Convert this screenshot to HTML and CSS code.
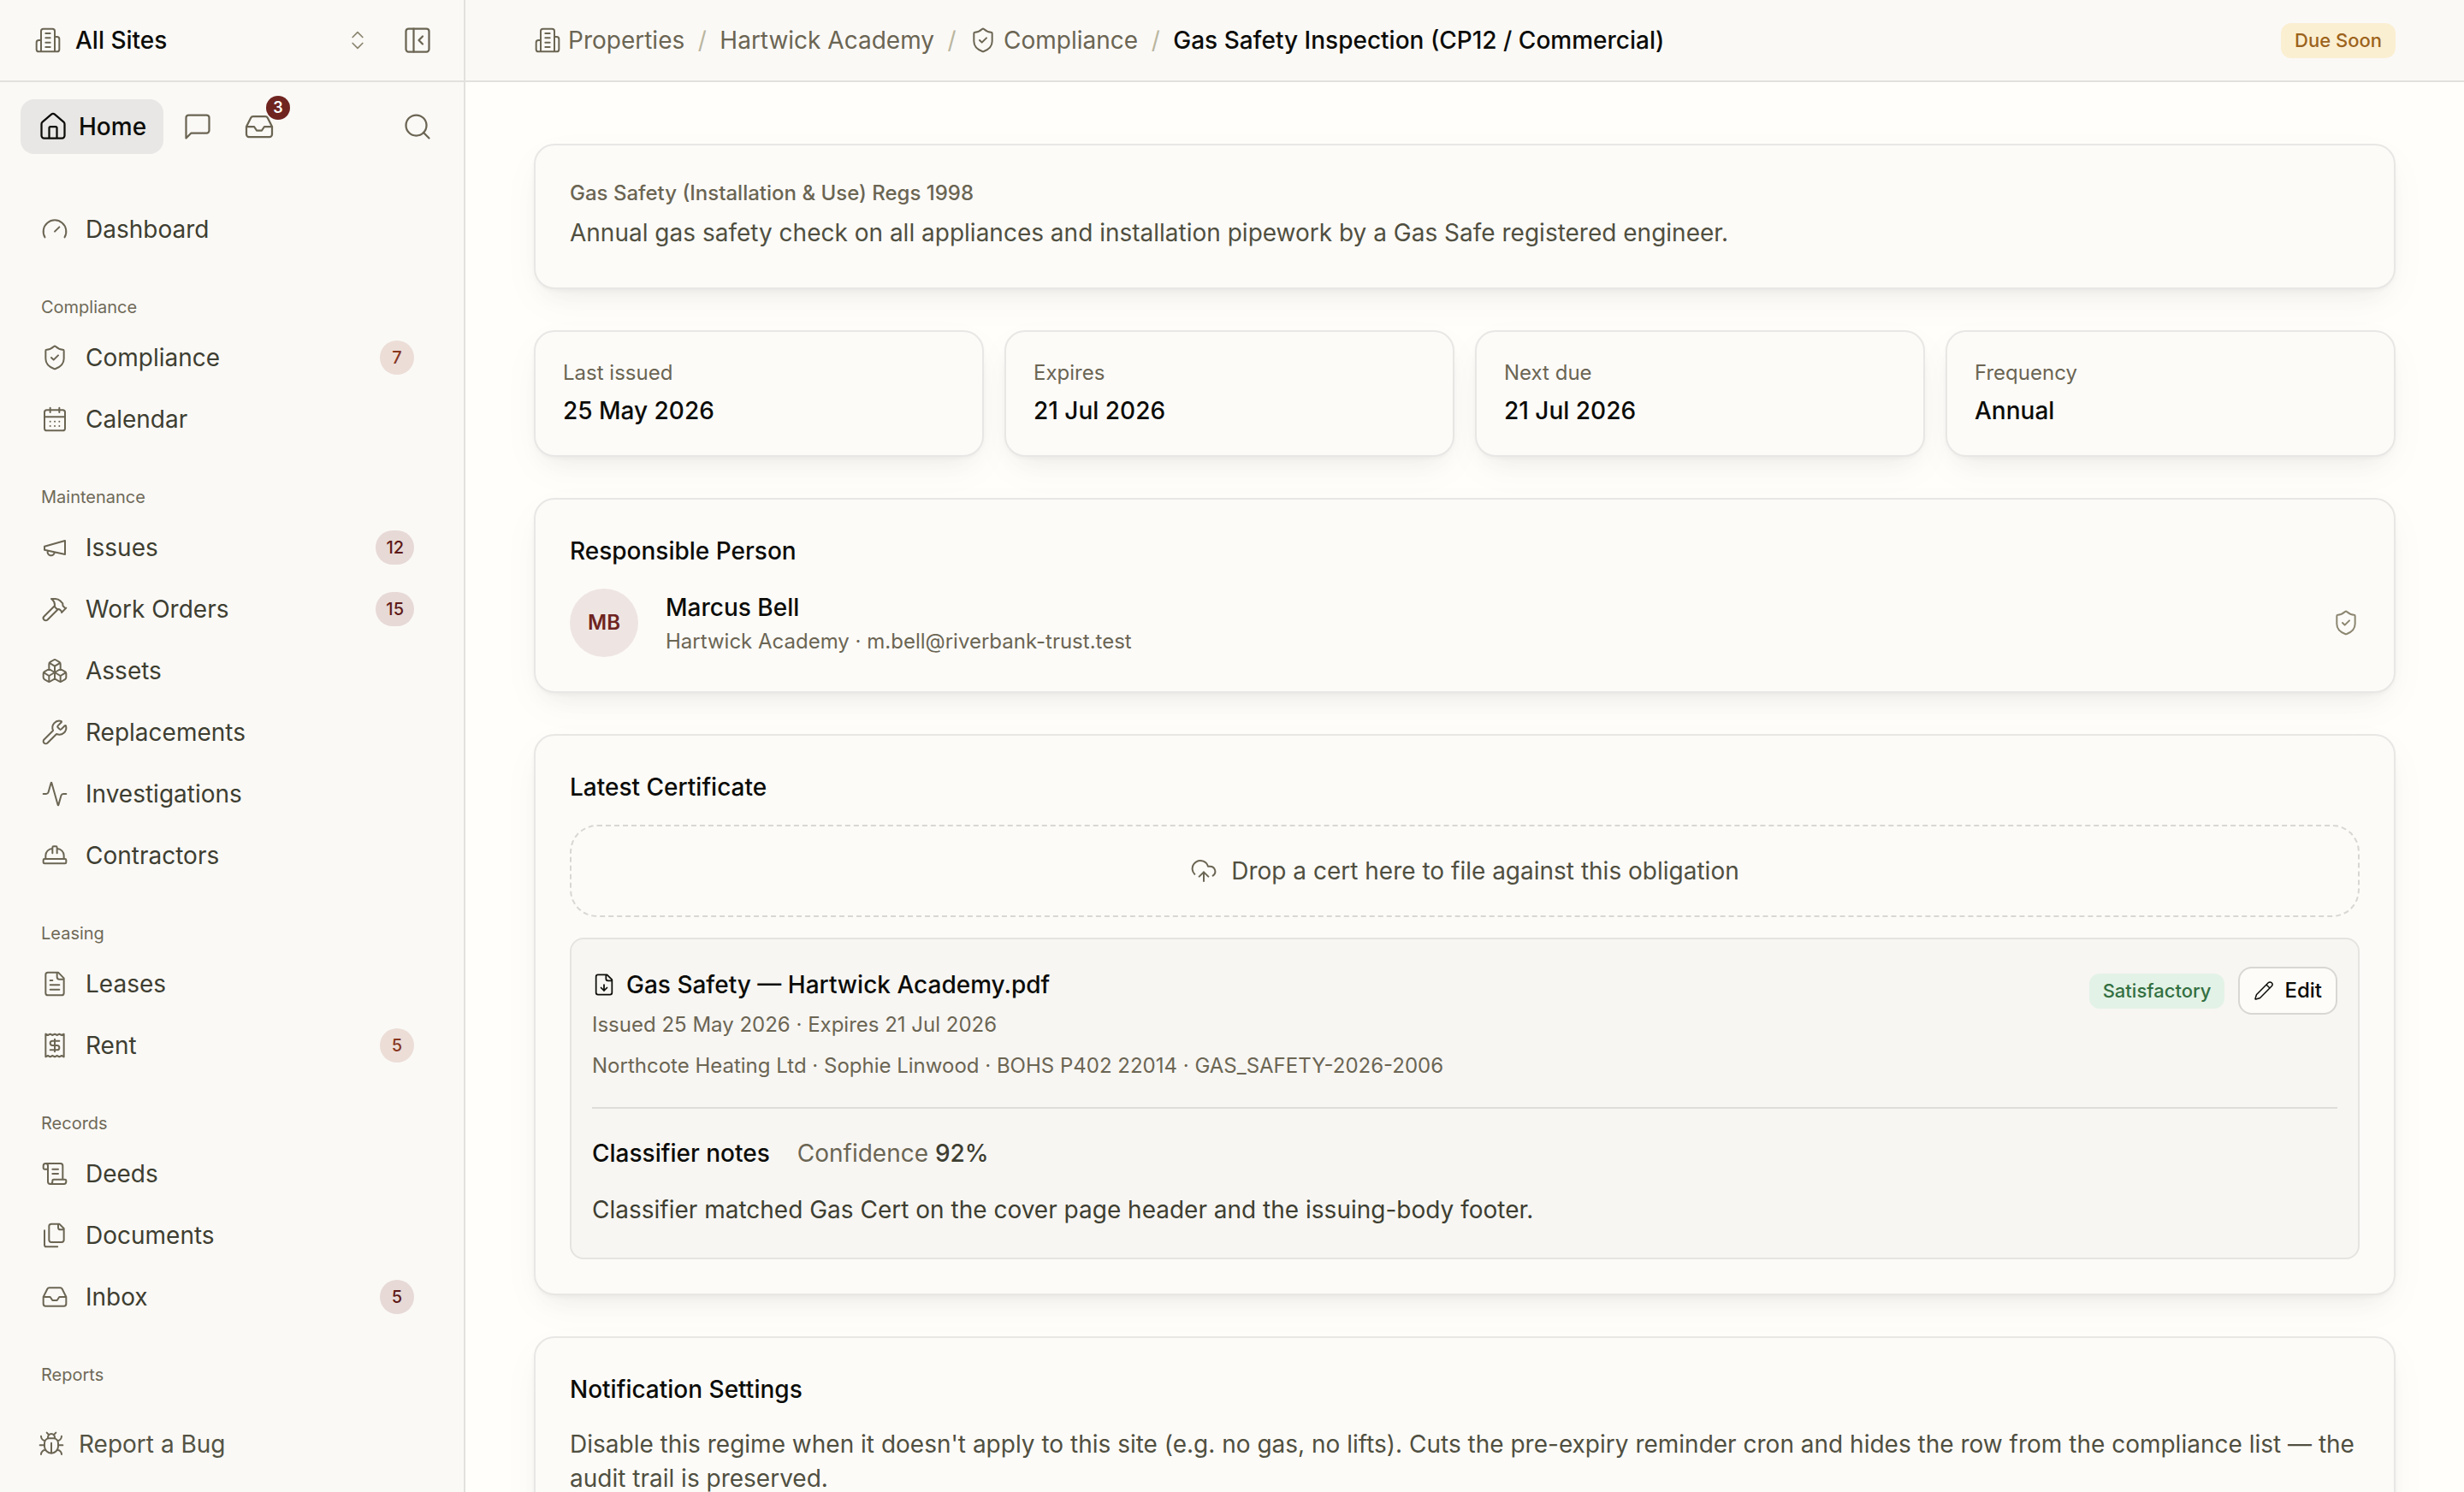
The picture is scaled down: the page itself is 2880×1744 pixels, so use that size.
FILE: index.html
```html
<!DOCTYPE html>
<html lang="en">

<head>
    <meta charset="UTF-8">
    <meta name="viewport" content="width=device-width, initial-scale=1.0">
    <title>Gas Safety Inspection (CP12 / Commercial)</title>
    <link rel="stylesheet" href="styles.css">
</head>

<body>
    <!-- Icon sprite -->
    <svg class="sprite">
        <symbol id="building" viewBox="0 0 24 24">
            <path d="M6 22V4a2 2 0 0 1 2-2h8a2 2 0 0 1 2 2v18Z M6 12H4a2 2 0 0 0-2 2v6a2 2 0 0 0 2 2h2 M18 9h2a2 2 0 0 1 2 2v9a2 2 0 0 1-2 2h-2 M10 6h4 M10 10h4 M10 14h4 M10 18h4" />
        </symbol>
        <symbol id="shield" viewBox="0 0 24 24">
            <path d="M20 13c0 5-3.5 7.5-7.66 8.95a1 1 0 0 1-.67-.01C7.5 20.5 4 18 4 13V6a1 1 0 0 1 1-1c2 0 4.5-1.2 6.24-2.72a1.17 1.17 0 0 1 1.52 0C14.51 3.81 17 5 19 5a1 1 0 0 1 1 1z M9 12l2 2 4-4" />
        </symbol>
        <symbol id="inbox" viewBox="0 0 24 24">
            <path d="M22 12h-6l-2 3h-4l-2-3H2 M5.45 5.11 2 12v6a2 2 0 0 0 2 2h16a2 2 0 0 0 2-2v-6l-3.45-6.89A2 2 0 0 0 16.76 4H7.24a2 2 0 0 0-1.79 1.11z" />
        </symbol>
    </svg>

    <div class="app">
        <aside class="sidebar">
            <div class="site-switch">
                <svg class="icon"><use href="#building" /></svg>
                <span class="site-name">All Sites</span>
                <svg class="icon icon-sm faint" viewBox="0 0 24 24"><path d="m7 15 5 5 5-5 M7 9l5-5 5 5" /></svg>
                <svg class="icon icon-lg" viewBox="0 0 24 24"><rect x="3" y="3" width="18" height="18" rx="2" /><path d="M9 3v18 M16 15l-3-3 3-3" /></svg>
            </div>

            <div class="quick-bar">
                <a class="home-btn">
                    <svg class="icon icon-lg" viewBox="0 0 24 24"><path d="M15 21v-8a1 1 0 0 0-1-1h-4a1 1 0 0 0-1 1v8 M3 10a2 2 0 0 1 .709-1.528l7-5.999a2 2 0 0 1 2.582 0l7 5.999A2 2 0 0 1 21 10v9a2 2 0 0 1-2 2H5a2 2 0 0 1-2-2z" /></svg>
                    Home
                </a>
                <a class="quick-btn">
                    <svg class="icon icon-lg" viewBox="0 0 24 24"><path d="M21 15a2 2 0 0 1-2 2H7l-4 4V5a2 2 0 0 1 2-2h14a2 2 0 0 1 2 2z" /></svg>
                </a>
                <a class="quick-btn">
                    <svg class="icon icon-lg"><use href="#inbox" /></svg>
                    <span class="notify">3</span>
                </a>
                <a class="quick-btn search">
                    <svg class="icon icon-lg" viewBox="0 0 24 24"><circle cx="11" cy="11" r="8" /><path d="m21 21-4.3-4.3" /></svg>
                </a>
            </div>

            <nav class="nav">
                <a class="nav-item">
                    <svg class="icon" viewBox="0 0 24 24"><path d="m12 14 4-4 M3.34 19a10 10 0 1 1 17.32 0" /></svg>
                    <span>Dashboard</span>
                </a>

                <p class="nav-label">Compliance</p>
                <a class="nav-item">
                    <svg class="icon"><use href="#shield" /></svg>
                    <span>Compliance</span>
                    <b class="count warm">7</b>
                </a>
                <a class="nav-item">
                    <svg class="icon" viewBox="0 0 24 24"><rect x="3" y="4" width="18" height="18" rx="2" /><path d="M8 2v4 M16 2v4 M3 10h18 M8 14h.01 M12 14h.01 M16 14h.01 M8 18h.01 M12 18h.01 M16 18h.01" /></svg>
                    <span>Calendar</span>
                </a>

                <p class="nav-label">Maintenance</p>
                <a class="nav-item">
                    <svg class="icon" viewBox="0 0 24 24"><path d="m3 11 18-5v12L3 14v-3z M11.6 16.8a3 3 0 1 1-5.8-1.6" /></svg>
                    <span>Issues</span>
                    <b class="count">12</b>
                </a>
                <a class="nav-item">
                    <svg class="icon" viewBox="0 0 24 24"><path d="m15 12-9.373 9.373a1 1 0 0 1-3.001-3L12 9 M18 15l4-4 M21.5 11.5l-1.914-1.914A2 2 0 0 1 19 8.172V7l-2.26-2.26a6 6 0 0 0-4.202-1.756L9 2.96l.92.82A6.18 6.18 0 0 1 12 8.4V10l2 2h1.172a2 2 0 0 1 1.414.586L18.5 14.5" /></svg>
                    <span>Work Orders</span>
                    <b class="count">15</b>
                </a>
                <a class="nav-item">
                    <svg class="icon" viewBox="0 0 24 24"><path d="M2.97 12.92A2 2 0 0 0 2 14.63v3.24a2 2 0 0 0 .97 1.71l3 1.8a2 2 0 0 0 2.06 0L12 19v-5.5l-5-3-4.03 2.42Z M7 16.5l-4.74-2.85 M7 16.5l5-3 M7 16.5v5.17 M12 13.5V19l3.97 2.38a2 2 0 0 0 2.06 0l3-1.8a2 2 0 0 0 .97-1.71v-3.24a2 2 0 0 0-.97-1.71L17 10.5l-5 3Z M17 16.5l-5-3 M17 16.5l4.74-2.85 M17 16.5v5.17 M7.97 4.42A2 2 0 0 0 7 6.13v4.37l5 3 5-3V6.13a2 2 0 0 0-.97-1.71l-3-1.8a2 2 0 0 0-2.06 0l-3 1.8Z M12 8 7.26 5.15 M12 8l4.74-2.85 M12 13.5V8" /></svg>
                    <span>Assets</span>
                </a>
                <a class="nav-item">
                    <svg class="icon" viewBox="0 0 24 24"><path d="M14.7 6.3a1 1 0 0 0 0 1.4l1.6 1.6a1 1 0 0 0 1.4 0l3.106-3.105c.32-.322.863-.22.983.218a6 6 0 0 1-8.259 7.057l-7.91 7.91a1 1 0 0 1-2.999-3l7.91-7.91a6 6 0 0 1 7.057-8.259c.438.12.54.662.219.984z" /></svg>
                    <span>Replacements</span>
                </a>
                <a class="nav-item">
                    <svg class="icon" viewBox="0 0 24 24"><path d="M22 12h-2.48a2 2 0 0 0-1.93 1.46l-2.35 8.36a.25.25 0 0 1-.48 0L9.24 2.18a.25.25 0 0 0-.48 0l-2.35 8.36A2 2 0 0 1 4.49 12H2" /></svg>
                    <span>Investigations</span>
                </a>
                <a class="nav-item">
                    <svg class="icon" viewBox="0 0 24 24"><rect x="2" y="15" width="20" height="4" rx="1" /><path d="M10 10V5a1 1 0 0 1 1-1h2a1 1 0 0 1 1 1v5 M14 6a6 6 0 0 1 6 6v3 M4 15v-3a6 6 0 0 1 6-6" /></svg>
                    <span>Contractors</span>
                </a>

                <p class="nav-label">Leasing</p>
                <a class="nav-item">
                    <svg class="icon" viewBox="0 0 24 24"><path d="M15 2H6a2 2 0 0 0-2 2v16a2 2 0 0 0 2 2h12a2 2 0 0 0 2-2V7Z M14 2v4a2 2 0 0 0 2 2h4 M10 9H8 M16 13H8 M16 17H8" /></svg>
                    <span>Leases</span>
                </a>
                <a class="nav-item">
                    <svg class="icon" viewBox="0 0 24 24"><path d="M4 2v20l2-1 2 1 2-1 2 1 2-1 2 1 2-1 2 1V2l-2 1-2-1-2 1-2-1-2 1-2-1-2 1Z M16 8h-6a2 2 0 1 0 0 4h4a2 2 0 1 1 0 4H8 M12 17.5v-11" /></svg>
                    <span>Rent</span>
                    <b class="count warm">5</b>
                </a>

                <p class="nav-label">Records</p>
                <a class="nav-item">
                    <svg class="icon" viewBox="0 0 24 24"><path d="M15 12h-5 M15 8h-5 M19 17V5a2 2 0 0 0-2-2H4 M8 21h12a2 2 0 0 0 2-2v-1a1 1 0 0 0-1-1H11a1 1 0 0 0-1 1v1a2 2 0 1 1-4 0V5a2 2 0 1 0-4 0v2a1 1 0 0 0 1 1h3" /></svg>
                    <span>Deeds</span>
                </a>
                <a class="nav-item">
                    <svg class="icon" viewBox="0 0 24 24"><path d="M20 7h-3a2 2 0 0 1-2-2V2 M9 18a2 2 0 0 1-2-2V4a2 2 0 0 1 2-2h7l4 4v10a2 2 0 0 1-2 2Z M3 7.6v12.8A1.6 1.6 0 0 0 4.6 22h9.8" /></svg>
                    <span>Documents</span>
                </a>
                <a class="nav-item">
                    <svg class="icon"><use href="#inbox" /></svg>
                    <span>Inbox</span>
                    <b class="count">5</b>
                </a>

                <p class="nav-label">Reports</p>
            </nav>

            <a class="report-bug">
                <svg class="icon" viewBox="0 0 24 24"><path d="m8 2 1.88 1.88 M14.12 3.88 16 2 M9 7.13v-1a3.003 3.003 0 1 1 6 0v1 M12 20c-3.3 0-6-2.7-6-6v-3a4 4 0 0 1 4-4h4a4 4 0 0 1 4 4v3c0 3.3-2.7 6-6 6 M12 20v-9 M6.53 9C4.6 8.8 3 7.1 3 5 M6 13H2 M3 21c0-2.1 1.7-3.9 3.8-4 M20.97 5c0 2.1-1.6 3.8-3.5 4 M22 13h-4 M17.2 17c2.1.1 3.8 1.9 3.8 4" /></svg>
                Report a Bug
            </a>
        </aside>

        <main class="main">
            <header class="topbar">
                <div class="crumbs">
                    <a class="crumb"><svg class="icon"><use href="#building" /></svg>Properties</a>
                    <span class="slash">/</span>
                    <a class="crumb">Hartwick Academy</a>
                    <span class="slash">/</span>
                    <a class="crumb"><svg class="icon"><use href="#shield" /></svg>Compliance</a>
                    <span class="slash">/</span>
                    <span class="crumb current">Gas Safety Inspection (CP12 / Commercial)</span>
                </div>
                <span class="tag amber">Due Soon</span>
            </header>

            <div class="content">
                <section class="card intro">
                    <p class="reg">Gas Safety (Installation &amp; Use) Regs 1998</p>
                    <p class="desc">Annual gas safety check on all appliances and installation pipework by a Gas Safe registered engineer.</p>
                </section>

                <div class="stats">
                    <div class="card stat">
                        <p class="stat-label">Last issued</p>
                        <p class="stat-value">25 May 2026</p>
                    </div>
                    <div class="card stat">
                        <p class="stat-label">Expires</p>
                        <p class="stat-value">21 Jul 2026</p>
                    </div>
                    <div class="card stat">
                        <p class="stat-label">Next due</p>
                        <p class="stat-value">21 Jul 2026</p>
                    </div>
                    <div class="card stat">
                        <p class="stat-label">Frequency</p>
                        <p class="stat-value">Annual</p>
                    </div>
                </div>

                <section class="card">
                    <h2>Responsible Person</h2>
                    <div class="person">
                        <div class="avatar">MB</div>
                        <div class="person-info">
                            <p class="person-name">Marcus Bell</p>
                            <p class="meta">Hartwick Academy · m.bell@riverbank-trust.test</p>
                        </div>
                        <svg class="icon faint"><use href="#shield" /></svg>
                    </div>
                </section>

                <section class="card">
                    <h2>Latest Certificate</h2>
                    <div class="dropzone">
                        <svg class="icon" viewBox="0 0 24 24"><path d="M12 13v8 M4 14.899A7 7 0 1 1 15.71 8h1.79a4.5 4.5 0 0 1 2.5 8.242 M8 17l4-4 4 4" /></svg>
                        Drop a cert here to file against this obligation
                    </div>
                    <div class="cert">
                        <div class="cert-head">
                            <div class="cert-info">
                                <p class="cert-name">
                                    <svg class="icon icon-sm" viewBox="0 0 24 24"><path d="M15 2H6a2 2 0 0 0-2 2v16a2 2 0 0 0 2 2h12a2 2 0 0 0 2-2V7Z M14 2v4a2 2 0 0 0 2 2h4 M12 18v-6 M9 15l3 3 3-3" /></svg>
                                    Gas Safety — Hartwick Academy.pdf
                                </p>
                                <p class="meta">Issued 25 May 2026 · Expires 21 Jul 2026</p>
                                <p class="meta">Northcote Heating Ltd · Sophie Linwood · BOHS P402 22014 · GAS_SAFETY-2026-2006</p>
                            </div>
                            <div class="cert-actions">
                                <span class="tag green">Satisfactory</span>
                                <button class="edit-btn">
                                    <svg class="icon icon-xs" viewBox="0 0 24 24"><path d="M21.174 6.812a1 1 0 0 0-3.986-3.987L3.842 16.174a2 2 0 0 0-.5.83l-1.321 4.352a.5.5 0 0 0 .623.622l4.353-1.32a2 2 0 0 0 .83-.497z M15 5l4 4" /></svg>
                                    Edit
                                </button>
                            </div>
                        </div>
                        <div class="notes">
                            <div class="notes-head">
                                <strong>Classifier notes</strong>
                                <span class="confidence">Confidence <em>92%</em></span>
                            </div>
                            <p>Classifier matched Gas Cert on the cover page header and the issuing-body footer.</p>
                        </div>
                    </div>
                </section>

                <section class="card">
                    <h2>Notification Settings</h2>
                    <p class="settings-text">Disable this regime when it doesn't apply to this site (e.g. no gas, no lifts). Cuts the pre-expiry reminder cron and hides the row from the compliance list — the audit trail is preserved.</p>
                </section>
            </div>
        </main>
    </div>
</body>

</html>
```
FILE: styles.css
```css
* {
    padding: 0;
    margin: 0;
    box-sizing: border-box;
}

body {
    font-family: Inter, "Liberation Sans", sans-serif;
    font-size: 28px;
    line-height: 42px;
    color: #0c0c09;
    background-color: #fffefb;
}

.sprite {
    display: none;
}

.icon {
    width: 32px;
    height: 32px;
    flex-shrink: 0;
    fill: none;
    stroke: #6b6553;
    stroke-width: 1.5;
    stroke-linecap: round;
    stroke-linejoin: round;
}

.icon-lg {
    width: 36px;
    height: 36px;
}

.icon-sm {
    width: 28px;
    height: 28px;
}

.icon-xs {
    width: 24px;
    height: 24px;
}

.faint {
    stroke: #8c8670;
}

.app {
    display: flex;
    height: 100vh;
    overflow: hidden;
}

/* Sidebar */
.sidebar {
    display: flex;
    flex-direction: column;
    width: 544px;
    flex-shrink: 0;
    background-color: #faf9f6;
    border-right: 2px solid #e2e1dd;
}

.site-switch {
    display: flex;
    align-items: center;
    height: 96px;
    padding: 0 36px 0 40px;
    border-bottom: 2px solid #e2e1dd;
}

.site-name {
    flex: 1;
    margin-left: 16px;
    font-weight: 500;
}

.site-switch .icon-lg {
    margin-left: 38px;
}

.quick-bar {
    display: flex;
    align-items: center;
    gap: 8px;
    padding: 20px 22px 0 24px;
}

.home-btn {
    display: flex;
    align-items: center;
    gap: 12px;
    height: 64px;
    padding: 0 20px;
    font-weight: 500;
    background-color: #e8e7e5;
    border-radius: 16px;
}

.home-btn .icon {
    stroke: #0c0c09;
}

.quick-btn {
    position: relative;
    display: flex;
    align-items: center;
    justify-content: center;
    width: 64px;
    height: 64px;
}

.search {
    margin-left: auto;
}

.notify {
    position: absolute;
    top: -4px;
    right: -4px;
    width: 28px;
    height: 28px;
    line-height: 28px;
    font-size: 18px;
    font-weight: 600;
    text-align: center;
    color: #fff;
    background-color: #6f2420;
    border-radius: 50%;
}

.nav {
    flex: 1;
    overflow: hidden;
    padding: 52px 58px 0 48px;
}

.nav-item {
    display: flex;
    align-items: center;
    gap: 20px;
    height: 72px;
    color: #3e3e31;
}

.nav-label {
    margin: 39px 0 7px;
    font-size: 20px;
    line-height: 32px;
    color: #6f6958;
}

.count {
    min-width: 40px;
    height: 40px;
    margin-left: auto;
    padding: 0 12px;
    font-size: 20px;
    font-weight: 500;
    line-height: 40px;
    text-align: center;
    color: #5e1a18;
    background-color: #e7d9d6;
    border-radius: 20px;
}

.warm {
    color: #86371f;
    background-color: #ecddd7;
}

.report-bug {
    display: flex;
    align-items: center;
    gap: 16px;
    height: 110px;
    padding: 0 0 2px 44px;
    color: #545344;
}

/* Top bar */
.main {
    flex: 1;
    min-width: 0;
}

.topbar {
    display: flex;
    align-items: center;
    justify-content: space-between;
    height: 96px;
    padding: 0 80px;
    background-color: #faf9f6;
    border-bottom: 2px solid #e2e1dd;
}

.crumbs {
    display: flex;
    align-items: center;
    gap: 15.5px;
}

.crumb {
    display: flex;
    align-items: center;
    gap: 8px;
    color: #6b6553;
}

.current {
    font-weight: 500;
    color: #0c0c09;
}

.slash {
    color: #bab69f;
}

.tag {
    padding: 4px 16px;
    font-size: 22px;
    font-weight: 500;
    line-height: 33px;
    border-radius: 12px;
}

.amber {
    color: #9c631c;
    background-color: #fbefd2;
}

.green {
    color: #337042;
    background-color: #e3f2e6;
}

/* Cards */
.content {
    display: flex;
    flex-direction: column;
    gap: 48px;
    padding: 72px 80px;
}

.card {
    padding: 40px;
    background-color: #fcfbf8;
    border: 2px solid #e8e7e5;
    border-radius: 24px;
    box-shadow: 0 2px 4px rgba(12, 12, 9, 0.03), 0 16px 32px -16px rgba(12, 12, 9, 0.07), 0 16px 48px rgba(12, 12, 9, 0.03);
}

h2 {
    margin-bottom: 24px;
    font-size: 28px;
    font-weight: 500;
    line-height: 40px;
}

.reg {
    margin-bottom: 6px;
    font-size: 24px;
    font-weight: 500;
    line-height: 32px;
    color: #6b6553;
}

.desc {
    line-height: 48px;
    color: #504f40;
}

.stats {
    display: grid;
    grid-template-columns: repeat(4, 1fr);
    gap: 24px;
}

.stat {
    padding: 32px;
}

.stat-label {
    margin-bottom: 8px;
    font-size: 24px;
    line-height: 32px;
    color: #6b6553;
}

.stat-value {
    font-weight: 500;
    line-height: 40px;
}

.person {
    display: flex;
    align-items: center;
    height: 80px;
}

.avatar {
    width: 80px;
    height: 80px;
    line-height: 80px;
    font-size: 24px;
    font-weight: 600;
    text-align: center;
    color: #6f2420;
    background-color: #eee5e3;
    border-radius: 50%;
}

.person-info {
    flex: 1;
    margin-left: 32px;
}

.person-name {
    font-weight: 500;
}

.meta {
    font-size: 24px;
    line-height: 37px;
    color: #6b6553;
}

/* Certificate */
.dropzone {
    display: flex;
    align-items: center;
    justify-content: center;
    gap: 16px;
    height: 108px;
    margin-bottom: 24px;
    color: #504f40;
    border: 2px dashed #d8d7d3;
    border-radius: 32px;
}

.cert {
    height: 376px;
    padding: 32px 24px;
    background-color: #f7f6f3;
    border: 2px solid #e5e4e0;
    border-radius: 16px;
}

.cert-head {
    display: flex;
    justify-content: space-between;
    align-items: flex-start;
    padding-bottom: 30px;
    border-bottom: 2px solid #deddd9;
}

.cert-name {
    display: flex;
    align-items: center;
    gap: 12px;
    font-weight: 500;
}

.cert-name .icon,
.edit-btn .icon {
    stroke: #0c0c09;
}

.cert-info .meta {
    margin-top: 8px;
    line-height: 36px;
}

.cert-info .meta + .meta {
    margin-top: 12px;
}

.cert-actions {
    display: flex;
    align-items: center;
    gap: 16px;
}

.edit-btn {
    display: flex;
    align-items: center;
    gap: 12px;
    height: 56px;
    padding: 0 16px;
    font: inherit;
    font-size: 24px;
    font-weight: 500;
    color: #0c0c09;
    background-color: #fdfcf9;
    border: 2px solid #d8d7d3;
    border-radius: 16px;
}

.notes {
    padding-top: 31px;
    color: #3e3e31;
}

.notes-head {
    display: flex;
    gap: 32px;
    margin-bottom: 24px;
}

.notes-head strong {
    font-weight: 500;
    color: #0c0c09;
}

.confidence {
    color: #6b6553;
}

.confidence em {
    font-style: normal;
    font-weight: 500;
    color: #3e3e31;
}

.settings-text {
    line-height: 40px;
    color: #504f40;
}
```
